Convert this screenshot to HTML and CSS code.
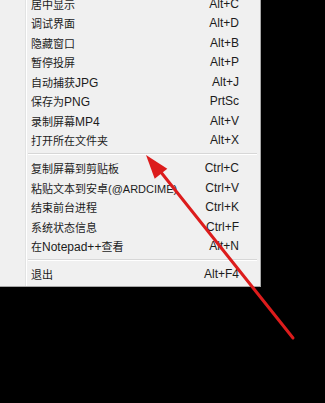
FILE: index.html
```html
<!DOCTYPE html>
<html lang="zh-CN">
<head>
    <meta charset="UTF-8">
    <title>菜单</title>
    <link rel="stylesheet" href="styles.css">
</head>
<body>
    <div class="menu">
        <div class="item"><span><i>居中显示</i></span><span>Alt+C</span></div>
        <div class="item"><span><i>调试界面</i></span><span>Alt+D</span></div>
        <div class="item"><span><i>隐藏窗口</i></span><span>Alt+B</span></div>
        <div class="item"><span><i>暂停投屏</i></span><span>Alt+P</span></div>
        <div class="item"><span><i>自动捕获</i>JPG</span><span>Alt+J</span></div>
        <div class="item"><span><i>保存为</i>PNG</span><span>PrtSc</span></div>
        <div class="item"><span><i>录制屏幕</i>MP4</span><span>Alt+V</span></div>
        <div class="item"><span><i>打开所在文件夹</i></span><span>Alt+X</span></div>
        <div class="sep"></div>
        <div class="item"><span><i>复制屏幕到剪贴板</i></span><span>Ctrl+C</span></div>
        <div class="item"><span><i>粘贴文本到安卓</i><b>(@ARDCIME)</b></span><span>Ctrl+V</span></div>
        <div class="item"><span><i>结束前台进程</i></span><span>Ctrl+K</span></div>
        <div class="item"><span><i>系统状态信息</i></span><span>Ctrl+F</span></div>
        <div class="item"><span><i>在</i>Notepad++<i>查看</i></span><span>Alt+N</span></div>
        <div class="sep"></div>
        <div class="item"><span><i>退出</i></span><span>Alt+F4</span></div>
    </div>

    <svg class="arrow" width="325" height="403" viewBox="0 0 325 403">
        <line x1="293" y1="338" x2="160" y2="171" stroke="#dc1c1c" stroke-width="3" stroke-linecap="round"/>
        <polygon points="146,155 154.7,178.8 167.3,168.8" fill="#dc1c1c"/>
    </svg>
</body>
</html>
```

FILE: styles.css
```css
body {
    margin: 0;
    background-color: #000;
    font-family: "Liberation Sans", "Noto Sans CJK SC", sans-serif;
    font-size: 12px;
    color: #1c1c1c;
    height: 403px;
    overflow: hidden;
    position: relative;
}
.menu {
    width: 260px;
    margin-top: -6px;
    padding-bottom: 2px;
    background-color: #f0f0f0;
    border-right: 1px solid #a7a7a7;
    border-bottom: 1px solid #a7a7a7;
    background-image: linear-gradient(to right, transparent 25px, #e2e3e3 25px, #e2e3e3 26px, #fff 26px, #fff 27px, transparent 27px);
}
.item {
    height: 19.5px;
    display: flex;
    align-items: center;
    justify-content: space-between;
    padding-left: 31px;
    padding-right: 21px;
    white-space: nowrap;
}
.item i {
    font-style: normal;
    font-size: 11px;
}
.item b {
    font-weight: normal;
    font-size: 11px;
}
.sep {
    height: 8.5px;
    margin-left: 28px;
    margin-right: 3px;
    display: flex;
    flex-direction: column;
    justify-content: center;
}
.sep::before {
    content: "";
    height: 1px;
    background-color: #d7d7d7;
    border-bottom: 1px solid #fff;
}
.arrow {
    position: absolute;
    top: 0;
    left: 0;
}
```
